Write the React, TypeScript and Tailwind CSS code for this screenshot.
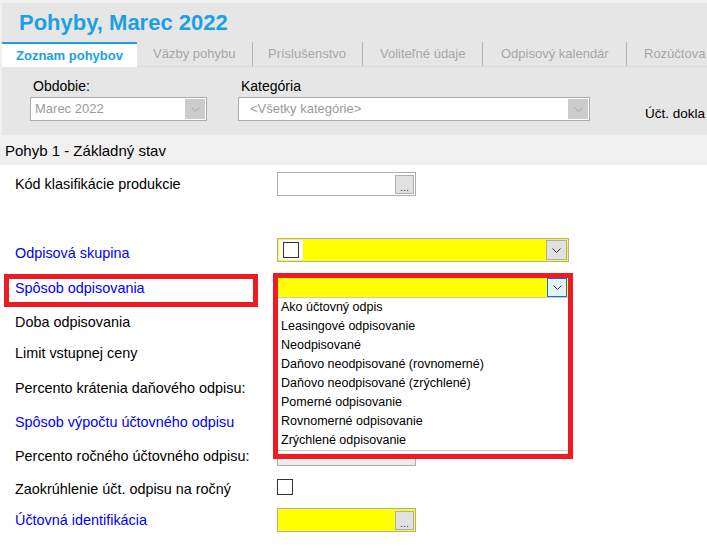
import React from 'react';

const FONT = { fontFamily: '"Liberation Sans", Arial, sans-serif' };

function Chevron({ color = '#333' }: { color?: string }) {
    return (
        <svg width="9" height="5" viewBox="0 0 9 5" fill="none">
            <path d="M0.5 0.5 L4.5 4.5 L8.5 0.5" stroke={color} strokeWidth="1" />
        </svg>
    );
}

function DotsInput({ yellow = false }: { yellow?: boolean }) {
    return (
        <div className={`w-[139px] h-[24px] border border-[#adadad] flex justify-end items-start pt-[2px] pr-[1px] ${yellow ? 'bg-[#ffff00]' : 'bg-white'}`}>
            <div className="w-[19px] h-[19px] bg-[#e1e1e1] border border-[#adadad] flex items-end justify-center text-[11px] leading-[12px] text-[#444]">...</div>
        </div>
    );
}

function FilterSelect({ value, width }: { value: string; width: string }) {
    return (
        <div className={`${width} h-[24px] bg-white border border-[#adadad] flex items-stretch p-[1px] pl-[4px]`}>
            <span className="flex-1 text-[13px] leading-[20px] text-[#9a9a9a]">{value}</span>
            <div className="w-[20px] bg-[#cccccc] flex items-center justify-center">
                <Chevron color="#a8a8a8" />
            </div>
        </div>
    );
}

const rows: { label: string; blue?: boolean; h: string; control?: React.ReactNode }[] = [
    { label: 'Kód klasifikácie produkcie', h: 'h-[69px]', control: <DotsInput /> },
    {
        label: 'Odpisová skupina',
        blue: true,
        h: 'h-[35px]',
        control: (
            <div className="mt-[-3px] w-[292px] h-[24px] border border-[#adadad] bg-[#ffff00] flex p-[1px]">
                <div className="w-[24px] h-full bg-white flex items-center justify-center">
                    <div className="w-[16px] h-[16px] border border-[#333]" />
                </div>
                <div className="flex-1" />
                <div className="w-[21px] h-full bg-[#e1e1e1] border border-[#adadad] flex items-center justify-center">
                    <Chevron />
                </div>
            </div>
        ),
    },
    { label: 'Spôsob odpisovania', blue: true, h: 'h-[34px]' },
    { label: 'Doba odpisovania', h: 'h-[31px]' },
    { label: 'Limit vstupnej ceny', h: 'h-[35px]' },
    { label: 'Percento krátenia daňového odpisu:', h: 'h-[34px]' },
    { label: 'Spôsob výpočtu účtovného odpisu', blue: true, h: 'h-[34px]' },
    {
        label: 'Percento ročného účtovného odpisu:',
        h: 'h-[33px]',
        control: (
            <div className="mt-[-2px] flex items-center">
                <div className="w-[139px] h-[24px] border border-[#adadad] bg-[#ececec]" />
                <span className="ml-[13px] text-[13px]">%</span>
            </div>
        ),
    },
    {
        label: 'Zaokrúhlenie účt. odpisu na ročný',
        h: 'h-[31px]',
        control: <div className="mt-[2px] w-[16px] h-[16px] border border-[#333] bg-white" />,
    },
    { label: 'Účtovná identifikácia', blue: true, h: 'h-[24px]', control: <DotsInput yellow /> },
];

const options = [
    'Ako účtovný odpis',
    'Leasingové odpisovanie',
    'Neodpisované',
    'Daňovo neodpisované (rovnomerné)',
    'Daňovo neodpisované (zrýchlené)',
    'Pomerné odpisovanie',
    'Rovnomerné odpisovanie',
    'Zrýchlené odpisovanie',
];

const tabs = [
    { label: 'Väzby pohybu', cls: 'w-[115px] pl-[16px]' },
    { label: 'Príslušenstvo', cls: 'w-[110px] pl-[15px] border-l border-l-[#b4b4b4]' },
    { label: 'Voliteľné údaje', cls: 'w-[120px] pl-[17px] border-l border-l-[#b4b4b4]' },
    { label: 'Odpisový kalendár', cls: 'w-[144px] pl-[18px] border-l border-l-[#b4b4b4]' },
    { label: 'Rozúčtova', cls: 'flex-1 pl-[17px] border-l border-l-[#b4b4b4]' },
];

export default function App() {
    return (
        <div className="relative w-[707px] h-[548px] overflow-hidden bg-white text-black" style={FONT}>
            {/* Header */}
            <div className="bg-[#f0f0f0] pt-[3px] pl-[2px]">
                <div className="bg-[#e6e6e6]">
                    <div className="h-[39px] pl-[17px] pt-[7px] text-[22px] leading-[25px] font-bold text-[#1ba1e2] whitespace-nowrap">
                        Pohyby, Marec 2022
                    </div>

                    {/* Tabs */}
                    <div className="h-[25px] flex whitespace-nowrap">
                        <div className="w-[135px] h-full bg-white border-t-2 border-[#1ba1e2] flex items-center justify-center text-[13px] font-bold text-[#1ba1e2]">
                            Zoznam pohybov
                        </div>
                        <div className="flex-1 flex h-full border-b border-[#d9d9d9] overflow-hidden">
                            {tabs.map((t) => (
                                <div key={t.label} className={`h-full flex items-center shrink-0 text-[13px] text-[#a6a6a6] ${t.cls}`}>
                                    {t.label}
                                </div>
                            ))}
                        </div>
                    </div>

                    {/* Filters */}
                    <div className="h-[68px] flex pl-[28px] pt-[11px] whitespace-nowrap">
                        <div className="w-[177px] shrink-0">
                            <div className="h-[17px] pl-[3px] text-[14px] leading-[17px]">Obdobie:</div>
                            <div className="mt-[2px]">
                                <FilterSelect value="Marec 2022" width="w-[177px]" />
                            </div>
                        </div>
                        <div className="ml-[31px] w-[352px] shrink-0">
                            <div className="h-[17px] pl-[3px] text-[14px] leading-[17px]">Kategória</div>
                            <div className="mt-[2px]">
                                <FilterSelect value=" <Všetky kategórie>" width="w-[352px] pl-[11px]" />
                            </div>
                        </div>
                        <div className="ml-[55px] pt-[27px] text-[13.5px] leading-[17px]">Účt. dokla</div>
                    </div>
                </div>
            </div>

            {/* Section header */}
            <div className="h-[30px] bg-[#f0f0f0] pl-[5px] pt-[2px] flex items-center text-[15px]">
                Pohyb 1 - Základný stav
            </div>

            {/* Form */}
            <div className="pt-[7px]">
                {rows.map((r) => (
                    <div key={r.label} className={`flex items-start ${r.h}`}>
                        <div className={`w-[277px] shrink-0 pl-[15px] h-[24px] text-[14.4px] leading-[24px] whitespace-nowrap ${r.blue ? 'text-[#0000ff]' : ''}`}>
                            {r.label}
                        </div>
                        {r.control}
                    </div>
                ))}
            </div>

            {/* Annotation: label */}
            <div className="absolute left-[4px] top-[274px] w-[254px] h-[33px] border-[5px] border-[#ed1c24]" />

            {/* Annotation: opened dropdown */}
            <div className="absolute left-[273px] top-[273px] w-[300px] h-[186px] border-[5px] border-[#ed1c24] bg-white flex flex-col">
                <div className="h-[19px] shrink-0 bg-[#ffff00] flex justify-end pr-[1px]">
                    <div className="w-[20px] h-full bg-[#e5f1fb] border border-[#0078d7] flex items-center justify-center">
                        <Chevron />
                    </div>
                </div>
                <div className="border-t border-b border-[#c8c8c8]">
                    {options.map((o) => (
                        <div key={o} className="h-[19px] pl-[3px] text-[12.5px] leading-[19px] whitespace-nowrap">
                            {o}
                        </div>
                    ))}
                </div>
            </div>
        </div>
    );
}
